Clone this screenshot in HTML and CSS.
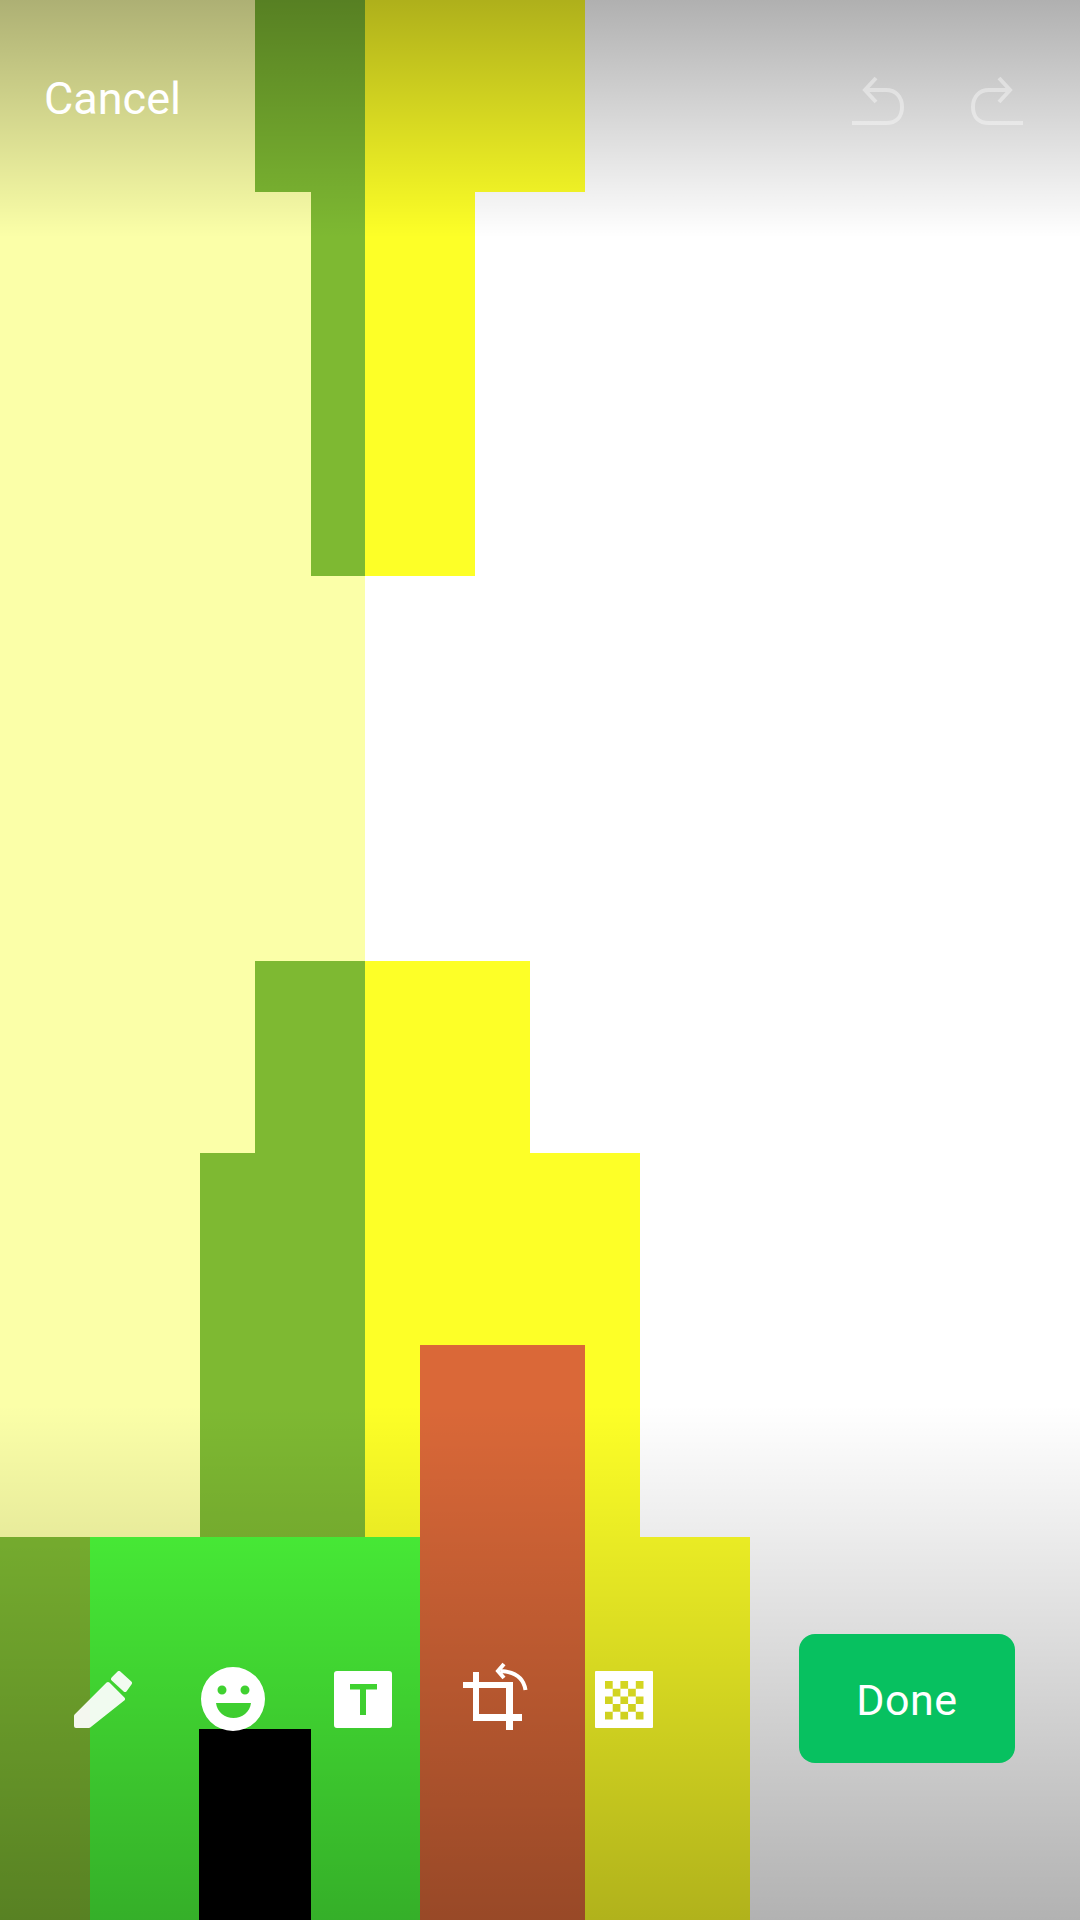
FILE: index.html
```html
<!DOCTYPE html>
<html lang="en">
<head>
<meta charset="utf-8">
<title>Edit image</title>
<link rel="stylesheet" href="styles.css">
</head>
<body>
<main class="stage">
  <div class="canvas">
    <div class="block pale a"></div>
    <div class="block green b"></div>
    <div class="block yellow c"></div>
    <div class="block green d"></div>
    <div class="block yellow e"></div>
    <div class="block green f"></div>
    <div class="block yellow g"></div>
    <div class="block green h"></div>
    <div class="block yellow i"></div>
    <div class="block green j"></div>
    <div class="block bright k"></div>
    <div class="block yellow l"></div>
    <div class="block orange m"></div>
    <div class="block black n"></div>
  </div>
  <div class="shade shade-top"></div>
  <div class="shade shade-bottom"></div>

  <header class="topbar">
    <span class="cancel">Cancel</span>
    <div class="history">
      <svg class="hist-icon" viewBox="0 0 60 60"><path d="M4 52H38C48 52 54 46 54 36C54 26 48 19 38 19H19M28 7L17 19L28 31"/></svg>
      <svg class="hist-icon flip" viewBox="0 0 60 60"><path d="M4 52H38C48 52 54 46 54 36C54 26 48 19 38 19H19M28 7L17 19L28 31"/></svg>
    </div>
  </header>

  <footer class="toolbar">
    <div class="tools">
      <svg class="tool pencil" viewBox="0 0 80 80"><path class="rounded" d="M56 13L67 23L62 30L50 19ZM45 24L60 39L26 66L13 66L13 56Z"/></svg>
      <svg class="tool" viewBox="0 0 80 80"><path fill-rule="evenodd" d="M40 7a32 32 0 1 0 0 64a32 32 0 1 0 0-64ZM29 25.500a4.500 4.500 0 1 1 0 9a4.500 4.500 0 1 1 0-9ZM52 25.500a4.500 4.500 0 1 1 0 9a4.500 4.500 0 1 1 0-9ZM23 43H58C57 52 49 58 40.500 58C32 58 24 52 23 43Z"/></svg>
      <svg class="tool" viewBox="0 0 80 80"><path fill-rule="evenodd" d="M14 11H66a3 3 0 0 1 3 3V65a3 3 0 0 1-3 3H14a3 3 0 0 1-3-3V14a3 3 0 0 1 3-3ZM27 24V29.500H37V55H43V29.500H54V24Z"/></svg>
      <svg class="tool" viewBox="0 0 80 80"><path d="M20 12h6v48h-6zM10 22h50v6h-50zM53 22h7v48h-7zM20 54h49v7h-49z"/><path class="arrow" d="M72.500 30C71 20 64 12 48 11M51 4L45 11L51 18"/></svg>
      <svg class="tool" viewBox="0 0 80 80"><path fill-rule="evenodd" d="M13 11H69a1 1 0 0 1 1 1V67a1 1 0 0 1-1 1H13a1 1 0 0 1-1-1V12a1 1 0 0 1 1-1ZM22 21h7.700v7.700h-7.700ZM37.400 21h7.700v7.700h-7.700ZM52.800 21h7.700v7.700h-7.700ZM29.700 28.700h7.700v7.700h-7.700ZM45.100 28.700h7.700v7.700h-7.700ZM22 36.400h7.700v7.700h-7.700ZM37.400 36.400h7.700v7.700h-7.700ZM52.800 36.400h7.700v7.700h-7.700ZM29.700 44.100h7.700v7.700h-7.700ZM45.100 44.100h7.700v7.700h-7.700ZM22 51.800h7.700v7.700h-7.700ZM37.400 51.800h7.700v7.700h-7.700ZM52.800 51.800h7.700v7.700h-7.700Z"/></svg>
    </div>
    <button class="done" type="button">Done</button>
  </footer>
</main>
</body>
</html>
```
FILE: styles.css
```css
* { box-sizing: border-box; }
html, body { margin: 0; padding: 0; }
body { width: 1080px; height: 1920px; overflow: hidden; background: #fff; font-family: Roboto, "Liberation Sans", sans-serif; }

.stage { position: relative; width: 1080px; height: 1920px; overflow: hidden; }

.canvas {
  display: grid;
  width: 100%;
  height: 100%;
  grid-template-columns: 90px 110px 55px 56px 54px 55px 55px 55px 55px 55px 110px 330px;
  grid-template-rows: 192px 384px 385px 192px 192px 192px 192px 191px;
}
.pale { background: #fbffa8; }
.green { background: #7eb932; }
.yellow { background: #fdff27; }
.bright { background: #4cfb3a; }
.orange { background: #da6838; }
.black { background: #000; }

.a { grid-column: 1 / 6; grid-row: 1 / 7; }
.b { grid-column: 4 / 6; grid-row: 1 / 2; }
.c { grid-column: 6 / 10; grid-row: 1 / 2; }
.d { grid-column: 5 / 6; grid-row: 2 / 3; }
.e { grid-column: 6 / 8; grid-row: 2 / 3; }
.f { grid-column: 4 / 6; grid-row: 4 / 5; }
.g { grid-column: 6 / 9; grid-row: 4 / 5; }
.h { grid-column: 3 / 6; grid-row: 5 / 7; }
.i { grid-column: 6 / 11; grid-row: 5 / 7; }
.j { grid-column: 1 / 2; grid-row: 7 / 9; }
.k { grid-column: 2 / 7; grid-row: 7 / 9; }
.l { grid-column: 10 / 12; grid-row: 7 / 9; }
.m { grid-column: 7 / 10; grid-row: 6 / 9; z-index: 1; }
.n { grid-column: 3 / 5; grid-row: 8 / 9; margin-left: -1px; z-index: 2; }

.shade { position: absolute; left: 0; right: 0; z-index: 3; }
.shade-top { top: 0; height: 238px; background: linear-gradient(to bottom, rgba(0,0,0,.31), rgba(0,0,0,0)); }
.shade-bottom { bottom: 0; height: 515px; background: linear-gradient(to top, rgba(0,0,0,.3), rgba(0,0,0,0)); }

.topbar {
  position: absolute;
  z-index: 4;
  top: 71px;
  left: 0;
  right: 0;
  height: 60px;
  padding: 0 53px 0 44px;
  display: flex;
  align-items: center;
  justify-content: space-between;
}
.cancel { color: #fff; font-size: 45px; line-height: 60px; margin-top: -4px; }
.history { display: flex; gap: 59px; }
.hist-icon { width: 60px; height: 60px; display: block; fill: none; stroke: rgba(255,255,255,.4); stroke-width: 4; }
.flip { transform: scaleX(-1); }

.toolbar {
  position: absolute;
  z-index: 4;
  left: 63px;
  right: 65px;
  top: 1634px;
  height: 129px;
  display: flex;
  align-items: center;
  justify-content: space-between;
}
.tools { display: flex; gap: 50px; margin-top: 2px; }
.tool { width: 80px; height: 80px; display: block; fill: #fff; }
.pencil { opacity: .93; }
.rounded { stroke: #fff; stroke-width: 4; stroke-linejoin: round; }
.arrow { fill: none; stroke: #fff; stroke-width: 4; }

.done {
  width: 216px;
  height: 129px;
  border: 0;
  border-radius: 16px;
  background: #07c160;
  color: #fff;
  font: 43px/1 Roboto, "Liberation Sans", sans-serif;
  letter-spacing: .5px;
  padding: 3px 0 0;
}
```
